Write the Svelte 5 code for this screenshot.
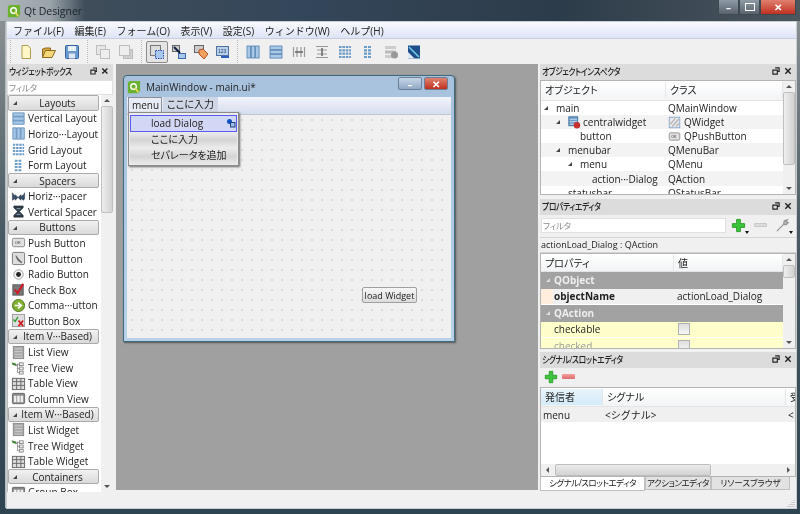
<script>
  const menus = ["ファイル(F)", "編集(E)", "フォーム(O)", "表示(V)", "設定(S)", "ウィンドウ(W)", "ヘルプ(H)"];

  const widgets = [
    { cat: "Layouts" },
    { name: "Vertical Layout", icon: "vbox" },
    { name: "Horizo···Layout", icon: "hbox" },
    { name: "Grid Layout", icon: "grid" },
    { name: "Form Layout", icon: "form" },
    { cat: "Spacers" },
    { name: "Horiz···pacer", icon: "hspacer" },
    { name: "Vertical Spacer", icon: "vspacer" },
    { cat: "Buttons" },
    { name: "Push Button", icon: "push" },
    { name: "Tool Button", icon: "tool" },
    { name: "Radio Button", icon: "radio" },
    { name: "Check Box", icon: "check" },
    { name: "Comma···utton", icon: "command" },
    { name: "Button Box", icon: "buttonbox" },
    { cat: "Item V···Based)" },
    { name: "List View", icon: "list" },
    { name: "Tree View", icon: "tree" },
    { name: "Table View", icon: "table" },
    { name: "Column View", icon: "column" },
    { cat: "Item W···Based)" },
    { name: "List Widget", icon: "list" },
    { name: "Tree Widget", icon: "tree" },
    { name: "Table Widget", icon: "table" },
    { cat: "Containers" },
    { name: "Group Box", icon: "column" }
  ];

  const tree = [
    { name: "main", cls: "QMainWindow", depth: 0, arrow: true },
    { name: "centralwidget", cls: "QWidget", depth: 1, arrow: true, icon: "central", clsIcon: "qwidget" },
    { name: "button", cls: "QPushButton", depth: 2, clsIcon: "push" },
    { name: "menubar", cls: "QMenuBar", depth: 1, arrow: true },
    { name: "menu", cls: "QMenu", depth: 2, arrow: true },
    { name: "action···Dialog", cls: "QAction", depth: 3 },
    { name: "statusbar", cls: "QStatusBar", depth: 1 }
  ];
</script>

{#snippet icon(name)}
  <svg class="icon" viewBox="0 0 16 16" width="16" height="16" aria-hidden="true">
    {#if name === "new"}
      <path d="M4 1.500h6l2.500 3v10H4z" fill="#fff6c8" stroke="#b09a50"/>
    {:else if name === "open"}
      <path d="M1.500 13.500V5l3-1h5v2" fill="#d8a840" stroke="#8a6a20"/>
      <path d="M1.500 13.500l3-7h10l-3.500 7z" fill="#f4d878" stroke="#8a6a20"/>
    {:else if name === "save"}
      <rect x="1.500" y="1.500" width="13" height="13" rx="1" fill="#6a9ad0" stroke="#34609a"/>
      <rect x="4" y="2" width="8" height="5" fill="#e8f0fa"/>
      <rect x="5" y="9.500" width="6" height="5" fill="#dde6f2"/>
    {:else if name === "copy"}
      <rect x="1.500" y="1.500" width="9" height="9" fill="#e6e6e6" stroke="#bdbdbd"/>
      <rect x="5.500" y="5.500" width="9" height="9" fill="#eeeeee" stroke="#bdbdbd"/>
    {:else if name === "paste"}
      <rect x="5.500" y="5.500" width="9" height="9" fill="#cfcfcf" stroke="#bdbdbd"/>
      <rect x="1.500" y="1.500" width="10" height="10" fill="#eeeeee" stroke="#bdbdbd"/>
    {:else if name === "edit"}
      <rect x="1.500" y="1.500" width="10" height="10" fill="#ddd" stroke="#777"/>
      <rect x="6.500" y="6.500" width="8" height="8" fill="#a8c8f0" stroke="#2a50b0" stroke-dasharray="1.500 1"/>
    {:else if name === "signal"}
      <rect x="1.500" y="1.500" width="7" height="6" fill="#ccc" stroke="#666"/>
      <rect x="7.500" y="9.500" width="7" height="5" fill="#a8c8f0" stroke="#3a6ab0"/>
      <path d="M3 3l6 6" stroke="#102040" stroke-width="2"/>
    {:else if name === "buddy"}
      <rect x="1.500" y="1.500" width="9" height="7" fill="#ccc" stroke="#666"/>
      <path d="M6 6l4-1 5 5-4 5-5-5z" fill="#f0a060" stroke="#b05020"/>
    {:else if name === "taborder"}
      <rect x="1.500" y="2.500" width="12" height="9" fill="#b8d0ec" stroke="#5070a0"/>
      <text x="3" y="9" font-size="5" fill="#204070" font-family="Liberation Sans, sans-serif">123</text>
      <path d="M6 13h8" stroke="#2a60c0" stroke-width="2"/>
    {:else if name === "hbox"}
      <rect x="2" y="2" width="3.500" height="12" fill="#a8c8e8" stroke="#5080b0" stroke-width=".8"/>
      <rect x="6.300" y="2" width="3.500" height="12" fill="#a8c8e8" stroke="#5080b0" stroke-width=".8"/>
      <rect x="10.600" y="2" width="3.500" height="12" fill="#a8c8e8" stroke="#5080b0" stroke-width=".8"/>
    {:else if name === "vbox"}
      <rect x="2" y="2" width="12" height="3.500" fill="#a8c8e8" stroke="#5080b0" stroke-width=".8"/>
      <rect x="2" y="6.300" width="12" height="3.500" fill="#a8c8e8" stroke="#5080b0" stroke-width=".8"/>
      <rect x="2" y="10.600" width="12" height="3.500" fill="#a8c8e8" stroke="#5080b0" stroke-width=".8"/>
    {:else if name === "hsplit"}
      <path d="M2.500 3v10M13.500 3v10M6 3v10M10 3v10" stroke="#999" stroke-width="1.200"/>
      <path d="M4 8h8" stroke="#666" stroke-width="1.500"/>
    {:else if name === "vsplit"}
      <path d="M2 2.500h12M2 13.500h12M3 6h10M3 10h10" stroke="#999" stroke-width="1.200"/>
      <path d="M8 4v8" stroke="#666" stroke-width="1.500"/>
    {:else if name === "grid"}
      <path d="M2 3h12M2 6.300h12M2 9.600h12M2 13h12" stroke="#6c9cc8" stroke-width="2.200" stroke-dasharray="2.600 .8"/>
    {:else if name === "form"}
      <path d="M4 3h8M4 6.300h8M4 9.600h8M4 13h8" stroke="#6c9cc8" stroke-width="2.200" stroke-dasharray="3 1"/>
    {:else if name === "break"}
      <rect x="2" y="2" width="11" height="3" fill="#ccc"/>
      <rect x="2" y="6.500" width="11" height="3" fill="#bbb"/>
      <rect x="2" y="11" width="7" height="3" fill="#ccc"/>
      <circle cx="11.500" cy="11" r="3.500" fill="#999"/>
    {:else if name === "adjust"}
      <rect x="2" y="1.500" width="12" height="13" fill="#1f4f88"/>
      <path d="M2 14.500V8l6.500 6.500z" fill="#dfe8f2"/>
      <path d="M3 3l10 10" stroke="#74d0e8" stroke-width="1.500"/>
    {:else if name === "hspacer"}
      <path d="M1.500 4v8l3-2v2l3-3 3 3v-2l3 2 1-2V4l-1 2-3 2V6l-3 3-3-3v2z" fill="#34506c" stroke="#223" stroke-width=".5"/>
    {:else if name === "vspacer"}
      <path d="M3 2h10v2L9 8l4 4v2H3v-2l4-4-4-4z" fill="#2c3c4c" stroke="#111" stroke-width=".5"/>
      <path d="M6 5h4M6 11h4" stroke="#a0b0c0"/>
    {:else if name === "push"}
      <rect x="1.500" y="3.500" width="13" height="9" rx="1.500" fill="#e0e0e0" stroke="#888"/>
      <text x="4" y="9.800" font-size="4.500" fill="#333" font-family="Liberation Sans, sans-serif">OK</text>
    {:else if name === "tool"}
      <rect x="1.500" y="1.500" width="13" height="13" rx="1.500" fill="#ddd" stroke="#777"/>
      <path d="M5 4l3 4 4 4-1 1-4-3-2-4z" fill="#666"/>
    {:else if name === "radio"}
      <circle cx="8" cy="8" r="5" fill="#f4f4f4" stroke="#999"/>
      <circle cx="8" cy="8" r="2.600" fill="#222"/>
    {:else if name === "check"}
      <rect x="2" y="3" width="11" height="11" fill="#777" stroke="#555"/>
      <path d="M4 8l3 4 6-10" fill="none" stroke="#d01828" stroke-width="2.200"/>
    {:else if name === "command"}
      <circle cx="8" cy="8" r="6.500" fill="#80b030" stroke="#507820"/>
      <path d="M4 8h5M7.500 5l3.500 3-3.500 3" fill="none" stroke="#fff" stroke-width="1.800"/>
    {:else if name === "buttonbox"}
      <rect x="1.500" y="1.500" width="13" height="13" fill="#ddd" stroke="#999"/>
      <path d="M2.500 7l2 2 3-5" fill="none" stroke="#30a030" stroke-width="1.500"/>
      <path d="M8 8l5 6M13 8l-5 6" stroke="#d01818" stroke-width="1.800"/>
    {:else if name === "list"}
      <rect x="2.500" y="1.500" width="11" height="13" fill="#aaa" stroke="#888"/>
      <path d="M4 4h8M4 7h8M4 10h8M4 13h8" stroke="#ccc"/>
    {:else if name === "tree"}
      <path d="M1 3l4 1 1 2-4-1z" fill="#409030" stroke="#286020" stroke-width=".5"/>
      <rect x="9" y="3" width="4" height="3" fill="#eee" stroke="#777" stroke-width=".8"/>
      <rect x="9" y="7.500" width="4" height="3" fill="#eee" stroke="#777" stroke-width=".8"/>
      <rect x="9" y="12" width="4" height="3" fill="#eee" stroke="#777" stroke-width=".8"/>
      <path d="M7 4.500v9h2M7 9h2M6 4.500h3" fill="none" stroke="#777" stroke-width=".8"/>
    {:else if name === "table"}
      <rect x="1.500" y="2.500" width="13" height="12" fill="#ddd" stroke="#666"/>
      <path d="M1.500 6h13M1.500 10h13M6 2.500v12M10.500 2.500v12" stroke="#666"/>
    {:else if name === "column"}
      <rect x="1.500" y="2.500" width="13" height="11" rx="1" fill="#888" stroke="#666"/>
      <rect x="3" y="5" width="2.800" height="7" fill="#eee"/>
      <rect x="6.600" y="5" width="2.800" height="7" fill="#eee"/>
      <rect x="10.200" y="5" width="2.800" height="7" fill="#eee"/>
    {:else if name === "central"}
      <rect x="1" y="1" width="11" height="11" fill="#6a9ac8" stroke="#3a6a98"/>
      <path d="M2 4h9M2 7h9M2 10h9" stroke="#dce8f4"/>
      <circle cx="11" cy="11.500" r="4" fill="#c83030"/>
    {:else if name === "qwidget"}
      <rect x="1.500" y="1.500" width="13" height="13" fill="#e8e8e8" stroke="#7aa0c8"/>
      <path d="M3 10l6-7M5 13l8-9M10 13l3-4" stroke="#b0b0b0" stroke-width="1.500"/>
    {/if}
  </svg>
{/snippet}

{#snippet plus(size)}
  <svg class="icon" viewBox="0 0 16 16" width={size} height={size} aria-hidden="true">
    <path d="M6 1.500h4v4.500h4.500v4H10v4.500H6V10H1.500V6H6z" fill="#3cc43c" stroke="#2a9a2a"/>
  </svg>
{/snippet}

{#snippet dockTitle(text)}
  <div class="dock-title">
    <span>{text}</span>
    <svg viewBox="0 0 9 9" width="8" height="8" aria-hidden="true"><path d="M3.500 1h4.500v4H6.500M1 3.500h5v4.500H1z" fill="none" stroke="#222" stroke-width="1.300"/></svg>
    <svg viewBox="0 0 9 9" width="8" height="8" aria-hidden="true"><path d="M1.500 1.500l6 6M7.500 1.500l-6 6" stroke="#222" stroke-width="1.600"/></svg>
  </div>
{/snippet}

{#snippet vscroll(thumbTop, thumbHeight)}
  <div class="vscroll">
    <span class="arrow-up"></span>
    <div class="thumb" style="margin-top:{thumbTop}px;height:{thumbHeight}px"></div>
    <span class="arrow-down"></span>
  </div>
{/snippet}

{#snippet qtLogo()}
  <svg class="icon" viewBox="0 0 16 16" width="14" height="14" aria-hidden="true">
    <path d="M3 1h12v11l-2 3H1V3z" fill="#6cb030"/>
    <circle cx="7.500" cy="7.500" r="3.200" fill="none" stroke="#fff" stroke-width="1.600"/>
    <path d="M9 9l4 5" stroke="#f0e060" stroke-width="1.800"/>
  </svg>
{/snippet}

<div class="desktop">
  <header class="titlebar">
    <div class="title-glow">
      {@render qtLogo()}
      <span>Qt Designer</span>
    </div>
    <div class="caption">
      <span class="cap-btn">–</span>
      <span class="cap-btn"><i></i></span>
      <span class="cap-btn close">✕</span>
    </div>
  </header>

  <div class="app">
    <nav class="menubar">
      {#each menus as m}<span>{m}</span>{/each}
    </nav>

    <div class="toolbar">
      <div class="tool-group first">
        {#each ["new", "open", "save"] as t}<span class="tool">{@render icon(t)}</span>{/each}
      </div>
      <div class="tool-group">
        {#each ["copy", "paste"] as t}<span class="tool">{@render icon(t)}</span>{/each}
      </div>
      <div class="tool-group narrow">
        <span class="tool pressed">{@render icon("edit")}</span>
        {#each ["signal", "buddy", "taborder"] as t}<span class="tool">{@render icon(t)}</span>{/each}
      </div>
      <div class="tool-group">
        {#each ["hbox", "vbox", "hsplit", "vsplit", "grid", "form", "break", "adjust"] as t}<span class="tool">{@render icon(t)}</span>{/each}
      </div>
    </div>

    <div class="workspace">
      <aside class="widget-box">
        {@render dockTitle("ウィジェットボックス")}
        <input class="filter" placeholder="フィルタ" />
        <div class="widget-list">
          <div class="widget-items">
            {#each widgets as w}
              {#if w.cat}
                <div class="category"><span class="tri"></span><span>{w.cat}</span></div>
              {:else}
                <div class="widget">{@render icon(w.icon)}<span>{w.name}</span></div>
              {/if}
            {/each}
          </div>
          {@render vscroll(0, 107)}
        </div>
      </aside>

      <main class="mdi">
        <section class="form-window">
          <div class="form-title">
            {@render qtLogo()}
            <span>MainWindow - main.ui*</span>
            <span class="form-caption">
              <span class="cap-btn">–</span>
              <span class="cap-btn close">✕</span>
            </span>
          </div>
          <div class="form-menu">
            <span class="menu-active">menu</span>
            <span class="menu-add">ここに入力</span>
          </div>
          <div class="form-canvas">
            <button class="load-widget">load Widget</button>
          </div>
          <div class="popup">
            <div class="popup-item selected">load Dialog
              <svg viewBox="0 0 10 10" width="10" height="10" aria-hidden="true"><circle cx="3.500" cy="3.500" r="2.500" fill="#1050c0"/><rect x="4.500" y="4.500" width="4.500" height="4.500" fill="#9cc0e8" stroke="#204080"/></svg>
            </div>
            <div class="popup-item">ここに入力</div>
            <div class="popup-item">セパレータを追加</div>
          </div>
        </section>
      </main>

      <aside class="right-docks">
        <section class="inspector">
          {@render dockTitle("オブジェクトインスペクタ")}
          <div class="table-box tree-box">
            <div class="table-main">
              <div class="head tree-cols"><span>オブジェクト</span><span>クラス</span></div>
              {#each tree as row, i}
                <div class="tree-row tree-cols" class:alt={i % 2 === 1}>
                  <span class="tree-name" style="padding-left:{row.depth * 12 + 3}px">
                    <span class="tri-slot">{#if row.arrow}<span class="tri"></span>{/if}</span>
                    {#if row.icon}{@render icon(row.icon)}{/if}
                    {row.name}
                  </span>
                  <span class="tree-class">{#if row.clsIcon}{@render icon(row.clsIcon)}{/if}{row.cls}</span>
                </div>
              {/each}
            </div>
            {@render vscroll(0, 73)}
          </div>
        </section>

        <section class="properties">
          {@render dockTitle("プロパティエディタ")}
          <div class="prop-tools">
            <input class="filter prop-filter" placeholder="フィルタ" />
            <span class="prop-icon">{@render plus(15)}<b class="drop"></b></span>
            <span class="prop-icon minus"><i></i></span>
            <span class="prop-icon">
              <svg class="icon" viewBox="0 0 16 16" width="15" height="15" aria-hidden="true"><path d="M2 14l8-8M9 7l1-4 3-1-1 2 2 1-2 2z" fill="#bbb" stroke="#999" stroke-width="1.500"/></svg>
              <b class="drop"></b>
            </span>
          </div>
          <div class="prop-label">actionLoad_Dialog : QAction</div>
          <div class="table-box prop-box">
            <div class="table-main">
              <div class="head prop-cols"><span>プロパティ</span><span>値</span></div>
              <div class="group-row"><span class="tri light"></span>QObject</div>
              <div class="prop-row prop-cols gray"><b>objectName</b><span>actionLoad_Dialog</span></div>
              <div class="group-row"><span class="tri light"></span>QAction</div>
              <div class="prop-row prop-cols yellow"><span>checkable</span><span><i class="box"></i></span></div>
              <div class="prop-row prop-cols yellow dim"><span>checked</span><span><i class="box"></i></span></div>
            </div>
            {@render vscroll(0, 13)}
          </div>
        </section>

        <section class="signals">
          {@render dockTitle("シグナル/スロットエディタ")}
          <div class="signal-tools">
            {@render plus(14)}
            <span class="red-minus"></span>
          </div>
          <div class="table-box signal-box">
            <div class="head signal-cols">
              <span class="sorted">発信者</span><span>シグナル</span><span>受信者</span>
            </div>
            <div class="signal-row signal-cols"><span>menu</span><span>&lt;シグナル&gt;</span><span>&lt;レシーバ&gt;</span></div>
            <div class="signal-empty"></div>
            <div class="hscroll">
              <span class="arrow-left"></span>
              <div class="hthumb"></div>
              <span class="arrow-right"></span>
            </div>
          </div>
          <div class="tabs">
            <span class="tab active">シグナル/スロットエディタ</span>
            <span class="tab">アクションエディタ</span>
            <span class="tab">リソースブラウザ</span>
          </div>
        </section>
      </aside>
    </div>

    <footer class="statusbar">
      <svg viewBox="0 0 9 9" width="9" height="9" aria-hidden="true"><path d="M7 1v1M5 3v1M7 3v1M3 5v1M5 5v1M7 5v1M1 7v1M3 7v1M5 7v1M7 7v1" stroke="#aaa"/></svg>
    </footer>
  </div>
</div>

<style>
  :global(body) {
    margin: 0;
    background: #2a3744;
  }

  .desktop {
    width: 800px;
    height: 514px;
    display: flex;
    flex-direction: column;
    overflow: hidden;
    font-family: "Open Sans", "Noto Sans CJK JP", sans-serif;
    font-size: 10px;
    color: #222;
    background: linear-gradient(#8f9598, #4a5a62 45%, #2e4450);
    filter: blur(0.3px);
  }

  .icon {
    display: block;
    flex: none;
  }

  .titlebar {
    height: 21px;
    flex: none;
    display: flex;
    justify-content: space-between;
    background: linear-gradient(90deg, #aeb6ba 0, #9aa3a9 50px, #3f4d5a 85px, #34465a 300px, #2d3c4a 70%, #4b565e 100%);
  }

  .title-glow {
    display: flex;
    align-items: center;
    gap: 3px;
    padding: 0 0 0 7px;
    font-size: 10.5px;
    color: #1c2228;
  }

  .caption {
    display: flex;
    height: 15px;
    margin-right: 4px;
  }

  .cap-btn {
    width: 21px;
    height: 15px;
    display: flex;
    align-items: center;
    justify-content: center;
    font-size: 10px;
    font-weight: 700;
    color: #fff;
    background: linear-gradient(#8e9aa5, #59636d);
    border: 1px solid #3e4850;
    border-top: 0;
    box-sizing: border-box;
  }

  .caption .cap-btn i {
    width: 8px;
    height: 6px;
    border: 1.5px solid #fff;
  }

  .caption .close {
    width: 36px;
    background: linear-gradient(#e08070, #c03020);
  }

  .app {
    flex: 1;
    min-height: 0;
    margin: 1px 4px 6px 7px;
    display: flex;
    flex-direction: column;
    background: #f0f0f0;
    box-shadow: 0 0 0 1px #c8ced2, -2px 0 0 #b4bcc0;
  }

  .menubar {
    height: 17px;
    box-sizing: border-box;
    flex: none;
    display: flex;
    align-items: center;
    gap: 10.5px;
    padding-left: 6px;
    background: linear-gradient(#f9fafe, #dde4f5);
    border-bottom: 1px solid #c8cfe0;
  }

  .toolbar {
    height: 25px;
    flex: none;
    display: flex;
    align-items: center;
    padding-left: 3px;
    background: #f0f0f0;
  }

  .tool-group {
    display: flex;
    align-items: center;
    padding: 0 3.5px 0 0;
    margin-right: 3.5px;
    border-right: 1px dotted #bbb;
    height: 23px;
  }

  .tool-group.first {
    border-left: 1px dotted #bbb;
    padding-left: 3.5px;
  }

  .tool-group:last-child {
    border-right: 0;
  }

  .tool {
    width: 23px;
    height: 22px;
    display: flex;
    align-items: center;
    justify-content: center;
    box-sizing: border-box;
  }

  .narrow .tool {
    width: 22px;
  }

  .pressed {
    border: 1px solid #8c8c8c;
    border-radius: 2px;
    background: #e4e4e4;
  }

  .workspace {
    flex: 1;
    min-height: 0;
    display: flex;
  }

  .dock-title {
    height: 16px;
    box-sizing: border-box;
    flex: none;
    display: flex;
    align-items: center;
    gap: 4px;
    padding: 0 4px 2px 2px;
    font-size: 9.5px;
    font-weight: 500;
    font-feature-settings: "palt";
    letter-spacing: -0.45px;
    background: #dcdcdc;
  }

  .dock-title span {
    flex: 1;
    white-space: nowrap;
    transform: scaleX(0.82);
    transform-origin: left center;
  }

  .widget-box {
    width: 106px;
    flex: none;
    display: flex;
    flex-direction: column;
    margin-right: 3px;
  }

  .filter {
    height: 15px;
    box-sizing: border-box;
    border: 0;
    padding: 0 2px;
    flex: none;
    font: inherit;
    font-size: 8.5px;
    font-feature-settings: "palt";
    letter-spacing: -0.3px;
    background: #fff;
    outline: 1px solid #e0e0e0;
    outline-offset: -1px;
  }

  .filter::placeholder {
    color: #8c8c8c;
  }

  .widget-list {
    flex: 1;
    min-height: 0;
    display: flex;
    background: #fff;
    overflow: hidden;
    border-left: 1px solid #bbb;
  }

  .widget-items {
    flex: 1;
    min-width: 0;
    padding-right: 2px;
  }

  .category {
    height: 15.58px;
    box-sizing: border-box;
    padding-left: 8px;
    display: flex;
    align-items: center;
    justify-content: center;
    position: relative;
    white-space: nowrap;
    background: linear-gradient(#f2f2f2, #dadada);
    border: 1px solid #aaa;
    border-radius: 2px;
  }

  .category .tri {
    position: absolute;
    left: 4px;
    top: 5px;
  }

  .tri {
    display: inline-block;
    width: 0;
    height: 0;
    border-left: 4px solid transparent;
    border-bottom: 4px solid #444;
  }

  .tri.light {
    border-bottom-color: #dedede;
    margin-right: 4px;
  }

  .widget {
    height: 15.58px;
    display: flex;
    align-items: center;
    gap: 2px;
    padding-left: 3px;
    white-space: nowrap;
  }

  .widget .icon {
    width: 15px;
    height: 15px;
  }

  .vscroll {
    width: 12px;
    flex: none;
    position: relative;
    background: #f0f0f0;
    padding-top: 11px;
    box-sizing: border-box;
  }

  .thumb {
    background: linear-gradient(90deg, #eee, #d2d2d2);
    border: 1px solid #c0c0c0;
    box-sizing: border-box;
    border-radius: 2px;
  }

  .arrow-up,
  .arrow-down {
    position: absolute;
    left: 3px;
    width: 0;
    height: 0;
    border-left: 3px solid transparent;
    border-right: 3px solid transparent;
  }

  .arrow-up {
    top: 4px;
    border-bottom: 3px solid #555;
  }

  .arrow-down {
    bottom: 4px;
    border-top: 3px solid #555;
  }

  .mdi {
    width: 422px;
    height: 426px;
    flex: none;
    position: relative;
    background: #a0a0a0;
    margin-right: 2px;
    overflow: hidden;
  }

  .form-window {
    position: absolute;
    left: 7px;
    top: 11px;
    width: 332px;
    height: 267px;
    box-sizing: border-box;
    padding: 0 3px 3px;
    display: flex;
    flex-direction: column;
    border: 1px solid #3e6a80;
    border-radius: 4px 4px 0 0;
    background: linear-gradient(#a8c2de, #b9d2ea);
    box-shadow: 1px 1px 2px #555;
  }

  .form-title {
    height: 21px;
    flex: none;
    display: flex;
    align-items: center;
    gap: 5px;
    font-size: 10px;
    color: #222;
  }

  .form-caption {
    display: flex;
    margin: -6px 3px 0 auto;
  }

  .form-caption .cap-btn {
    width: 24px;
    height: 13px;
    margin-left: 2px;
    border-radius: 2px;
    background: linear-gradient(#c6d6e8, #8fa8c4);
    border: 1px solid #6c7f96;
  }

  .form-caption .close {
    background: linear-gradient(#e08070, #c03020);
  }

  .form-menu {
    height: 17px;
    flex: none;
    display: flex;
    align-items: stretch;
    font-feature-settings: "palt";
    background: linear-gradient(#f1f4fb, #d6dded);
    border-bottom: 1px solid #c0c8d8;
  }

  .menu-active {
    width: 34px;
    box-sizing: border-box;
    padding-left: 3px;
    margin-left: 1px;
    line-height: 14px;
    border: 1px solid #8a8f98;
    border-bottom: 0;
    background: #e8ecf4;
  }

  .menu-add {
    padding: 0 4px;
    margin-left: 1px;
    line-height: 15px;
    background: #cfd6e6;
  }

  .form-canvas {
    flex: 1;
    position: relative;
    background-color: #f0f0f0;
    background-image: radial-gradient(circle, #c0c0c0 0.6px, transparent 0.8px);
    background-size: 10px 10px;
  }

  .load-widget {
    position: absolute;
    left: 235px;
    top: 172px;
    width: 55px;
    height: 16px;
    padding: 0;
    font: inherit;
    font-size: 9px;
    color: #222;
    border: 1px solid #a0a0a0;
    border-radius: 2px;
    background: linear-gradient(#f6f6f6, #dcdcdc);
  }

  .popup {
    position: absolute;
    left: 4px;
    top: 36px;
    width: 111px;
    height: 54px;
    box-sizing: border-box;
    padding: 2px 1px;
    font-feature-settings: "palt";
    background: #ececec;
    border: 1px solid #8a8a8a;
    box-shadow: 1px 1px 2px #666;
  }

  .popup-item {
    height: 16.5px;
    box-sizing: border-box;
    padding-left: 21px;
    line-height: 15px;
    position: relative;
    background: linear-gradient(#ececec, #d4d4d4 50%, #ececec);
  }

  .popup-item.selected {
    background: #d3d7f6;
    border: 1px solid #5a5af0;
    padding-left: 20px;
    line-height: 14px;
  }

  .popup-item svg {
    position: absolute;
    right: 0;
    top: 2px;
  }

  .right-docks {
    flex: 1;
    min-width: 0;
    display: flex;
    flex-direction: column;
  }

  .table-box {
    border: 1px solid #b4b4b4;
    background: #fff;
    overflow: hidden;
    box-sizing: border-box;
  }

  .tree-box,
  .prop-box {
    display: flex;
  }

  .table-main {
    flex: 1;
    min-width: 0;
    overflow: hidden;
  }

  .inspector {
    height: 135px;
    flex: none;
    display: flex;
    flex-direction: column;
  }

  .tree-box {
    height: 115px;
  }

  .head {
    height: 18px;
    box-sizing: border-box;
    display: grid;
    align-items: center;
    font-feature-settings: "palt";
    background: linear-gradient(#fff, #f2f4f6);
    border-bottom: 1px solid #e4e4e4;
  }

  .tree-box .head {
    height: 20px;
    padding-bottom: 2px;
  }

  .head span {
    padding-left: 4px;
    border-right: 1px solid #e4e6e8;
    line-height: 16px;
    white-space: nowrap;
  }

  .tree-cols {
    display: grid;
    grid-template-columns: 125px 1fr;
  }

  .tree-row {
    height: 14.1px;
    align-items: center;
    white-space: nowrap;
  }

  .tree-row.alt {
    background: #f3f3f3;
  }

  .tree-name {
    display: flex;
    align-items: center;
    gap: 2px;
  }

  .tree-name .icon,
  .tree-class .icon {
    width: 13px;
    height: 13px;
  }

  .tri-slot {
    width: 8px;
    flex: none;
    display: flex;
    align-items: center;
    margin-right: 2px;
  }

  .tree-class {
    display: flex;
    align-items: center;
    gap: 3px;
    padding-left: 2px;
  }

  .properties {
    height: 153px;
    flex: none;
    display: flex;
    flex-direction: column;
  }

  .prop-tools {
    height: 22px;
    flex: none;
    display: flex;
    align-items: center;
    padding: 1px 0 2px;
    box-sizing: border-box;
  }

  .prop-filter {
    width: 185px;
    margin: 0 1px 0 1px;
  }

  .prop-icon {
    width: 22px;
    height: 15px;
    position: relative;
    display: flex;
    justify-content: center;
  }

  .prop-icon.minus i {
    width: 13px;
    height: 4px;
    margin-top: 5px;
    background: #dcdcdc;
    border: 1px solid #c8c8c8;
    box-sizing: border-box;
    border-radius: 1px;
  }

  .drop {
    position: absolute;
    right: 0;
    bottom: -1px;
    border-left: 2.5px solid transparent;
    border-right: 2.5px solid transparent;
    border-top: 3px solid #111;
  }

  .prop-label {
    height: 14px;
    flex: none;
    line-height: 14px;
    padding-left: 1px;
    font-size: 9px;
    border-top: 1px solid #d4d4d4;
    border-bottom: 1px solid #d4d4d4;
    white-space: nowrap;
  }

  .prop-box {
    height: 96px;
  }

  .prop-cols {
    display: grid;
    grid-template-columns: 133px 1fr;
  }

  .prop-row.prop-cols {
    grid-template-columns: 121px 1fr;
  }

  .group-row {
    height: 16.5px;
    box-sizing: border-box;
    padding-left: 5px;
    display: flex;
    align-items: center;
    font-weight: 700;
    color: #eeeeee;
    background: #a2a2a2;
  }

  .prop-row {
    height: 16.5px;
    align-items: center;
    box-sizing: border-box;
    padding-left: 13px;
    background-repeat: no-repeat;
    border-bottom: 1px solid #fff;
  }

  .prop-row span:last-child {
    padding-left: 2px;
    display: flex;
    align-items: center;
  }

  .prop-row.gray {
    background-color: #f0f0f0;
    background-image: linear-gradient(#ffeedd, #ffeedd);
    background-size: 12px 100%;
  }

  .prop-row.yellow {
    background-color: #ffffcc;
  }

  .prop-row.dim {
    color: #9a9a9a;
  }

  .box {
    display: block;
    width: 10px;
    height: 10px;
    margin-left: 1px;
    background: linear-gradient(#dedede, #f6f6f6);
    border: 1px solid #b0b0b0;
  }

  .signals {
    flex: 1;
    min-height: 0;
    display: flex;
    flex-direction: column;
  }

  .signal-tools {
    height: 17px;
    margin-bottom: 2px;
    flex: none;
    box-sizing: border-box;
    display: flex;
    align-items: center;
    gap: 4px;
    padding-left: 4px;
  }

  .red-minus {
    width: 13px;
    height: 5px;
    border-radius: 1px;
    background: linear-gradient(#f4a0a0, #e06a6a);
  }

  .signal-box {
    height: 90px;
    flex: none;
    display: flex;
    flex-direction: column;
  }

  .signal-cols {
    display: grid;
    grid-template-columns: 62px 183px 1fr;
  }

  .signal-box .head {
    height: 19px;
  }

  .sorted {
    background: linear-gradient(#e8f4fc, #d4ebf8);
  }

  .signal-row {
    height: 15px;
    align-items: center;
    background: #f0f0f0;
    white-space: nowrap;
    overflow: hidden;
  }

  .signal-row span {
    padding-left: 2px;
  }

  .signal-empty {
    flex: 1;
  }

  .hscroll {
    height: 12px;
    flex: none;
    position: relative;
    padding-left: 14px;
    background: #f0f0f0;
  }

  .hthumb {
    width: 156px;
    height: 12px;
    box-sizing: border-box;
    background: linear-gradient(#ececec, #d2d2d2);
    border: 1px solid #bdbdbd;
    border-radius: 2px;
  }

  .arrow-left,
  .arrow-right {
    position: absolute;
    top: 3px;
    width: 0;
    height: 0;
    border-top: 3px solid transparent;
    border-bottom: 3px solid transparent;
  }

  .arrow-left {
    left: 5px;
    border-right: 3px solid #555;
  }

  .arrow-right {
    right: 5px;
    border-left: 3px solid #555;
  }

  .tabs {
    flex: none;
    display: flex;
    align-items: flex-start;
    font-size: 8.5px;
    font-feature-settings: "palt";
    letter-spacing: -0.5px;
  }

  .tab {
    width: 66px;
    height: 13px;
    box-sizing: border-box;
    text-align: center;
    line-height: 12px;
    white-space: nowrap;
    background: #e2e2e2;
    border: 1px solid #c0c0c0;
    border-top: 0;
  }

  .tab.active {
    width: 105px;
    height: 14px;
    background: #fff;
  }

  .tab:last-child {
    width: 79px;
    letter-spacing: 0;
  }

  .statusbar {
    height: 16px;
    flex: none;
    display: flex;
    justify-content: flex-end;
    align-items: flex-end;
    background: #f0f0f0;
  }
</style>
